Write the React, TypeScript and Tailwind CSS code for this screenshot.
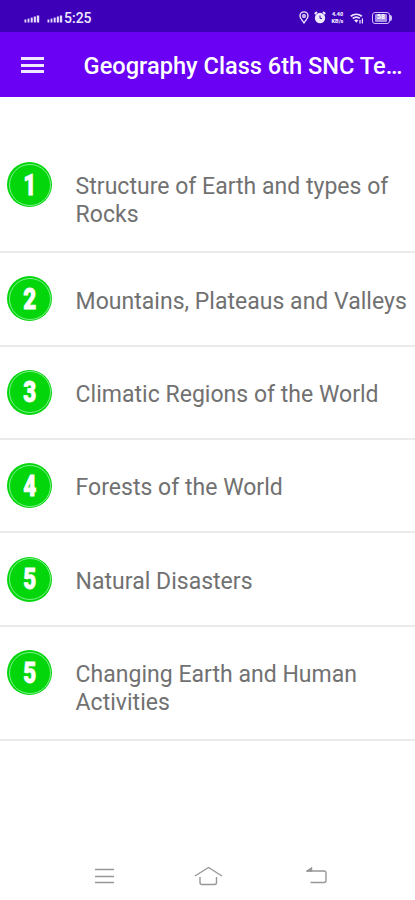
import React from 'react';

interface Chapter {
  id: number;
  badge: string;
  title: string;
}

const chapters: Chapter[] = [
  { id: 1, badge: '1', title: 'Structure of Earth and types of Rocks' },
  { id: 2, badge: '2', title: 'Mountains, Plateaus and Valleys' },
  { id: 3, badge: '3', title: 'Climatic Regions of the World' },
  { id: 4, badge: '4', title: 'Forests of the World' },
  { id: 5, badge: '5', title: 'Natural Disasters' },
  { id: 6, badge: '5', title: 'Changing Earth and Human Activities' }
];

const SignalIcon: React.FC = () => (
  <svg width="16" height="8" viewBox="0 0 16 8" fill="#e4dcfb" aria-hidden="true">
    <rect x="0.5" y="4.5" width="1.8" height="3" />
    <rect x="3.6" y="3.6" width="1.8" height="3.9" />
    <rect x="6.7" y="2.6" width="2" height="4.9" />
    <rect x="9.8" y="1.5" width="2.1" height="6" />
    <rect x="12.8" y="0.5" width="2.4" height="7" />
  </svg>
);

const StatusBar: React.FC = () => (
  <div className="flex h-[32px] items-center justify-between bg-[#3d00b8] pt-[3px] pl-[24px] pr-[23px] text-[#eee8ff]">
    <div className="flex items-center">
      <span className="mt-[3px] mr-[1px] flex gap-[7px]">
        <SignalIcon />
        <SignalIcon />
      </span>
      <span className="text-[14px] leading-none font-medium">5:25</span>
    </div>
    <div className="flex items-center">
      <svg width="10" height="13" viewBox="0 0 10 13" fill="none" stroke="currentColor" strokeWidth="1.4" aria-hidden="true">
        <path d="M5 11.8C3.5 9.5 1 7.4 1 4.9a4 4 0 0 1 8 0C9 7.4 6.5 9.5 5 11.8Z" />
        <circle cx="5" cy="4.9" r="1.3" />
      </svg>
      <svg className="ml-[5px]" width="12" height="13" viewBox="0 0 12 13" aria-hidden="true">
        <path d="M.7 3 3 1M11.3 3 9 1" stroke="currentColor" strokeWidth="1.8" />
        <circle cx="6" cy="7" r="5.2" fill="currentColor" />
        <path d="M6 4.5V7.4H8" fill="none" stroke="#3d00b8" strokeWidth="1" />
      </svg>
      <div className="ml-[4px] flex w-[15px] flex-col items-center gap-px text-[5.5px] leading-[6.5px] font-black">
        <span>4.40</span>
        <span>KB/s</span>
      </div>
      <svg className="ml-[5px] mt-[2px]" width="14" height="12" viewBox="0 0 14 12" aria-hidden="true">
        <path d="M.8 3.3C4 .8 8.5.8 11.8 3.3M2.8 5.4C5 3.8 7.7 3.8 9.8 5.4" fill="none" stroke="currentColor" strokeWidth="1.8" />
        <path d="M4.2 7.2Q6.3 5.8 8.4 7.2L6.3 9.8Z" fill="currentColor" />
        <path d="M10 7v3.5M12.4 5.5v5" stroke="currentColor" strokeWidth="1.2" />
      </svg>
      <div className="ml-[8px] flex h-[12px] w-[18px] items-center justify-center rounded-[3px] border border-[#cfc0fa]">
        <span className="flex h-[8px] w-[12px] items-center justify-center rounded-[1px] bg-[#a68fe6] text-[7px] leading-none font-bold text-white">58</span>
      </div>
      <span className="h-[6px] w-[2px] rounded-r bg-[#cfc0fa]" />
    </div>
  </div>
);

const AppBar: React.FC = () => (
  <header className="flex h-[65px] items-center bg-[#6a00f4] pt-px pl-[21px] text-white">
    <button type="button" aria-label="Open menu" className="flex w-[23px] flex-col gap-[3.5px]">
      <span className="h-[3px] bg-[#f1e8ff]" />
      <span className="h-[3px] bg-[#f1e8ff]" />
      <span className="h-[3px] bg-[#f1e8ff]" />
    </button>
    <h1 className="ml-[39.6px] pt-[2px] text-[23.6px] leading-[30px] font-medium whitespace-nowrap">
      Geography Class 6th SNC Te…
    </h1>
  </header>
);

const NumberBadge: React.FC<{ label: string }> = ({ label }) => (
  <div className="flex size-[45px] shrink-0 rounded-full bg-[#04d60c] p-[1.5px]">
    <div className="flex flex-1 items-center justify-center rounded-full border border-[#7df08a]">
      <span className="scale-x-[0.75] text-[30px] leading-none font-black text-white [-webkit-text-stroke:0.8px_white]">
        {label}
      </span>
    </div>
  </div>
);

const App: React.FC = () => {
  return (
    <div className="flex h-[900px] w-[415px] flex-col overflow-hidden bg-white font-['Roboto',sans-serif]">
      <StatusBar />
      <AppBar />
      <ul className="mt-[42px] flex-1">
        {chapters.map((chapter) => (
          <li key={chapter.id} className="flex items-start border-b-2 border-[#ebebeb] pt-[23.3px] pb-[23.1px] pl-[7px]">
            <NumberBadge label={chapter.badge} />
            <p className="mt-[11.2px] ml-[23.6px] w-[338px] text-[23px] leading-[27.3px] tracking-[0.02px] text-[#717171]">
              {chapter.title}
            </p>
          </li>
        ))}
      </ul>
      <nav className="flex h-[48px] items-center pl-[95px] text-[#979797]">
        <svg width="20" height="18" viewBox="0 0 20 18" stroke="currentColor" strokeWidth="1.4" aria-hidden="true">
          <path d="M0 2.5H19M0 9.5H19M0 15.5H19" />
        </svg>
        <svg className="ml-[79px]" width="29" height="20" viewBox="0 0 29 20" fill="none" stroke="currentColor" strokeWidth="1.4" aria-hidden="true">
          <path d="M1 10 14.5 1.5 28 10M6 11V16.5Q6 18.5 8 18.5H20.5Q22.5 18.5 22.5 16.5V11" />
        </svg>
        <svg className="ml-[83px]" width="22" height="18" viewBox="0 0 22 18" fill="none" stroke="currentColor" strokeWidth="1.4" aria-hidden="true">
          <path d="M1 4H18Q20 4 20 6V13.5Q20 15.5 18 15.5H4.5" />
          <path d="M1 4 5.5 1V4Z" fill="currentColor" />
        </svg>
      </nav>
    </div>
  );
};

export default App;
